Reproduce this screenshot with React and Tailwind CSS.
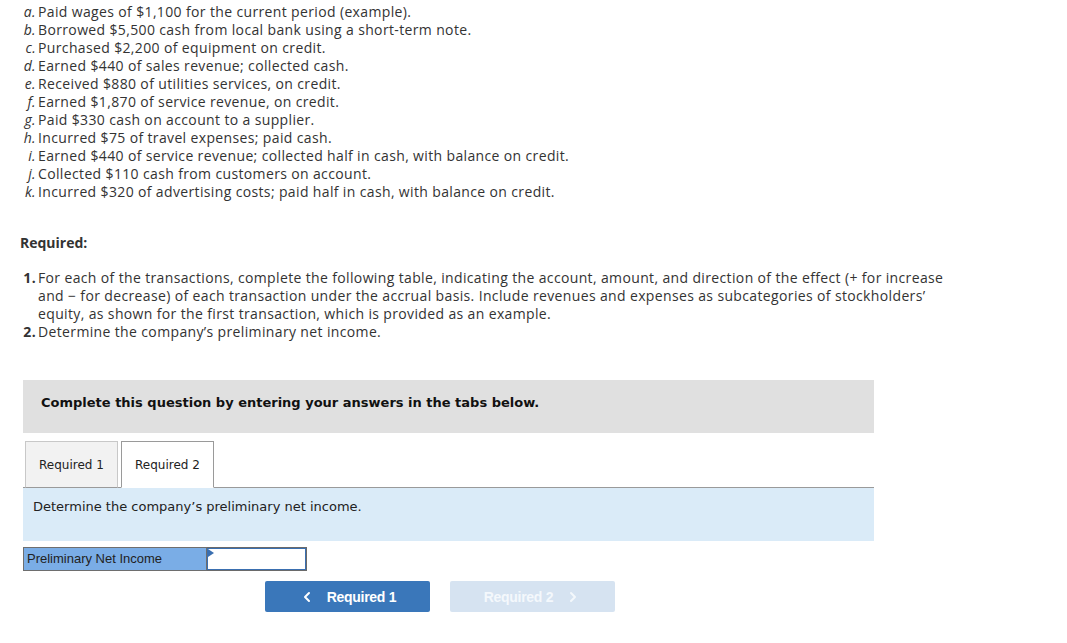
import { ChevronLeft, ChevronRight } from "lucide-react";

const transactions = [
  ["a.", "Paid wages of $1,100 for the current period (example)."],
  ["b.", "Borrowed $5,500 cash from local bank using a short-term note."],
  ["c.", "Purchased $2,200 of equipment on credit."],
  ["d.", "Earned $440 of sales revenue; collected cash."],
  ["e.", "Received $880 of utilities services, on credit."],
  ["f.", "Earned $1,870 of service revenue, on credit."],
  ["g.", "Paid $330 cash on account to a supplier."],
  ["h.", "Incurred $75 of travel expenses; paid cash."],
  ["i.", "Earned $440 of service revenue; collected half in cash, with balance on credit."],
  ["j.", "Collected $110 cash from customers on account."],
  ["k.", "Incurred $320 of advertising costs; paid half in cash, with balance on credit."],
];

export default function App() {
  return (
    <div className="min-h-[643px] bg-white pl-[20px] pt-[3px] text-[#333] font-['Open_Sans',sans-serif] text-[14px] leading-[18px]">
      {/* transaction list */}
      <div className="tracking-[0.36px]">
        {transactions.map(([label, text]) => (
          <div key={label} className="flex">
            <span className="w-[16px] text-right italic shrink-0">{label}</span>
            <span className="ml-[2px]">{text}</span>
          </div>
        ))}
      </div>

      <div className="mt-[33px] font-bold">Required:</div>

      <ol className="mt-[17px] w-[945px] tracking-[0.36px]">
        <li className="flex">
          <span className="w-[16px] shrink-0 text-right font-bold">1.</span>
          <span className="ml-[2px]">
            For each of the transactions, complete the following table, indicating the account, amount, and direction of
            the effect (+ for increase and − for decrease) of each transaction under the accrual basis. Include revenues
            and expenses as subcategories of stockholders’ equity, as shown for the first transaction, which is provided
            as an example.
          </span>
        </li>
        <li className="flex">
          <span className="w-[16px] shrink-0 text-right font-bold">2.</span>
          <span className="ml-[2px]">Determine the company’s preliminary net income.</span>
        </li>
      </ol>

      <div className="ml-[3px] w-[851px] font-['DejaVu_Sans',Verdana,sans-serif]">
        <div className="mt-[39px] h-[53px] bg-[#e0e0e0] px-[18px] pt-[14px] text-[13px] font-bold text-[#111]">
          Complete this question by entering your answers in the tabs below.
        </div>

        {/* tabs */}
        <div className="mt-[8px] flex gap-[3px] border-b border-[#9a9a9a] pl-[2px] text-[12px] text-[#222]">
          <div className="-mb-px flex h-[47px] w-[93px] items-center justify-center border border-b-[#9a9a9a] border-[#c8c8c8] bg-[#f2f2f2]">
            Required 1
          </div>
          <div className="-mb-px flex h-[47px] w-[93px] items-center justify-center border border-[#9a9a9a] border-b-white bg-white">
            Required 2
          </div>
        </div>

        <div className="h-[53px] bg-[#daebf8] px-[10px] pt-[10px] text-[13px] text-[#222]">
          Determine the company’s preliminary net income.
        </div>

        {/* answer row */}
        <div className="mt-[6px] flex h-[24px] w-[284px] font-['Liberation_Sans',Arial,sans-serif] text-[13px]">
          <div className="flex w-[184px] items-center border border-[#6e6e6e] bg-[#7aade6] pl-[3px] text-[#222]">
            Preliminary Net Income
          </div>
          <div className="relative w-[100px] border border-[#6a6a6a] border-l-0 bg-white shadow-[inset_0_0_0_1px_#3a6fb0]">
            <span className="absolute left-[1px] top-[1px] h-0 w-0 border-y-[4px] border-l-[6px] border-y-transparent border-l-[#3a6fb0]" />
          </div>
        </div>

        {/* nav buttons */}
        <div className="mt-[10px] flex gap-[20px] pl-[242px] font-['Liberation_Sans',Arial,sans-serif] text-[14px] font-bold">
          <button className="flex h-[31px] w-[165px] items-center justify-center gap-[12px] rounded-[2px] bg-[#3a77ba] text-white">
            <ChevronLeft size={16} strokeWidth={3} />
            <span className="tracking-[-0.3px]">Required 1</span>
          </button>
          <button className="flex h-[31px] w-[165px] items-center justify-center gap-[12px] rounded-[2px] bg-[#d6e3f1] text-[#f4f8fc]">
            <span className="tracking-[-0.3px]">Required 2</span>
            <ChevronRight size={16} strokeWidth={3} />
          </button>
        </div>
      </div>
    </div>
  );
}
